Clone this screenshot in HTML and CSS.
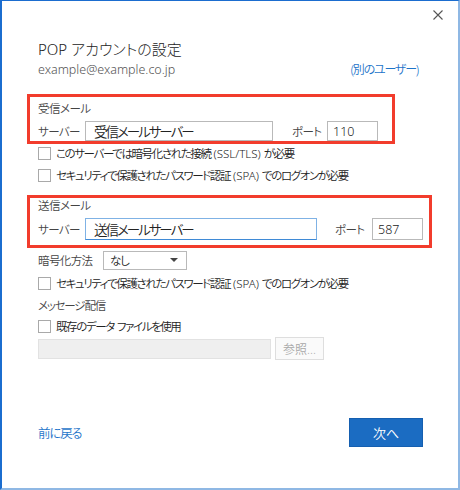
FILE: index.html
```html
<!DOCTYPE html>
<html lang="ja">
<head>
    <meta charset="UTF-8">
    <title>POP アカウントの設定</title>
    <link rel="stylesheet" href="styles.css">
</head>
<body>

<div class="dialog">
    <div class="titlebar">
        <button class="close" type="button" aria-label="閉じる">
            <svg width="10" height="10" viewBox="0 0 10 10">
                <path d="M0.5 0.5 L9.5 9.5 M9.5 0.5 L0.5 9.5" stroke="#555" stroke-width="1.1" fill="none"/>
            </svg>
        </button>
    </div>

    <div class="content">
        <h1 class="title">POP アカウントの設定</h1>
        <div class="account">
            <span class="email">example@example.co.jp</span>
            <a class="link other" href="#">(別のユーザー)</a>
        </div>

        <div class="group group-in">
            <div class="group-label">受信メール</div>
            <div class="server-row">
                <span class="label">サーバー</span>
                <input class="text server" type="text" value="受信メールサーバー">
                <span class="label port-label">ポート</span>
                <input class="text port" type="text" value="110">
            </div>
        </div>

        <label class="check check-ssl"><span class="box"></span>このサーバーでは暗号化された接続<span class="latin"> (SSL/TLS) </span>が必要</label>
        <label class="check check-spa1"><span class="box"></span>セキュリティで保護されたパスワード認証<span class="latin"> (SPA) </span>でのログオンが必要</label>

        <div class="group group-out">
            <div class="group-label">送信メール</div>
            <div class="server-row">
                <span class="label">サーバー</span>
                <input class="text server focused" type="text" value="送信メールサーバー">
                <span class="label port-label">ポート</span>
                <input class="text port" type="text" value="587">
            </div>
        </div>

        <div class="enc-row">
            <span class="label">暗号化方法</span>
            <div class="select">なし<span class="arrow"></span></div>
        </div>
        <label class="check check-spa2"><span class="box"></span>セキュリティで保護されたパスワード認証<span class="latin"> (SPA) </span>でのログオンが必要</label>

        <div class="section-label">メッセージ配信</div>
        <label class="check check-file"><span class="box"></span>既存のデータ<span class="latin"> </span>ファイルを使用</label>
        <div class="file-row">
            <div class="file-path"></div>
            <button class="browse" type="button" disabled>参照...</button>
        </div>

        <div class="footer">
            <a class="link back" href="#">前に戻る</a>
            <button class="next" type="button">次へ</button>
        </div>
    </div>
</div>

</body>
</html>
```

FILE: styles.css
```css
body {
    margin: 0;
    padding: 0;
    background-color: #fff;
    font-family: "Noto Sans", "Noto Sans CJK JP", sans-serif;
    font-size: 11.5px;
    font-weight: 350;
    font-feature-settings: "palt";
    letter-spacing: -1.2px;
    color: #222;
}
.dialog {
    height: 490px;
    box-sizing: border-box;
    border-top: 1px solid #1b6dcf;
    border-left: 2px solid #1b6dcf;
    border-right: 2px solid #8fb8e4;
    border-bottom: 2px solid #8fb8e4;
}
.titlebar {
    height: 38px;
    display: flex;
    justify-content: flex-end;
    padding-right: 15px;
}
.close {
    border: none;
    background: none;
    padding: 0;
    margin-top: 9px;
    width: 10px;
    height: 10px;
    display: flex;
}
.content {
    padding: 0 35px 0 36px;
}
.title {
    margin: 0;
    font-size: 15px;
    font-weight: 300;
    line-height: 20px;
    letter-spacing: 0;
    color: #222;
}
.account {
    display: flex;
    justify-content: space-between;
    align-items: center;
    height: 18px;
    margin-top: 1px;
}
.email {
    font-size: 12.5px;
    letter-spacing: 0;
    color: #555;
}
.link {
    color: #1d74c9;
    text-decoration: none;
}
.other {
    font-size: 12px;
    margin-right: 5px;
}
.group {
    border: 3px solid #f23c2c;
    margin-left: -11px;
    padding-left: 8px;
    margin-top: 16px;
}
.group-in {
    width: 354px;
    padding-top: 4px;
    padding-bottom: 0;
}
.group-out {
    width: 391px;
    margin-top: 11px;
    padding-top: 0;
    padding-bottom: 5px;
}
.group-label, .section-label {
    line-height: 16px;
    color: #444;
}
.group-label {
    letter-spacing: -0.5px;
}
.server-row {
    display: flex;
    align-items: center;
    margin-top: 4px;
}
.label {
    color: #444;
    letter-spacing: -0.6px;
}
.server-row .label:first-child {
    width: 47px;
}
.text {
    box-sizing: border-box;
    height: 20px;
    border: 1px solid #b9b9b9;
    padding: 0 8px;
    font-family: inherit;
    font-weight: 350;
    font-feature-settings: "palt";
    color: #222;
    outline: none;
}
.server {
    font-size: 13.5px;
    letter-spacing: -2px;
}
.group-in .server {
    width: 188px;
}
.group-out .server {
    width: 232px;
    height: 22px;
}
.focused {
    border-color: #7fb2e5;
    border-bottom-color: #3f8ad6;
}
.port {
    width: 51px;
    font-size: 12.5px;
    padding: 0 5px;
}
.group-out .port {
    height: 22px;
}
.group-in .port-label {
    margin-left: 19px;
    width: 35px;
}
.group-out .port-label {
    margin-left: 18px;
    width: 37px;
}
.check {
    display: flex;
    align-items: center;
    height: 18px;
    letter-spacing: -1.4px;
    white-space: pre;
    color: #222;
}
.latin {
    letter-spacing: 0;
}
.box {
    width: 11px;
    height: 11px;
    border: 1px solid #a9a9a9;
    margin-right: 5px;
    background: #fff;
    flex-shrink: 0;
}
.check-ssl {
    margin-top: 0;
}
.check-spa1 {
    margin-top: 4px;
}
.enc-row {
    display: flex;
    align-items: center;
    margin-top: 3px;
    height: 18px;
}
.enc-row .label {
    width: 65px;
}
.select {
    box-sizing: border-box;
    width: 84px;
    height: 19px;
    border: 1px solid #b9b9b9;
    padding: 0 6px;
    display: flex;
    align-items: center;
    justify-content: space-between;
    color: #222;
}
.arrow {
    width: 0;
    height: 0;
    border-left: 4px solid transparent;
    border-right: 4px solid transparent;
    border-top: 4px solid #444;
    margin-right: 2px;
}
.check-spa2 {
    margin-top: 5px;
}
.section-label {
    margin-top: 6px;
}
.check-file {
    margin-top: 3px;
}
.file-row {
    display: flex;
    align-items: center;
    margin-top: 2px;
    height: 23px;
}
.file-path {
    width: 233px;
    height: 20px;
    box-sizing: border-box;
    background: #efefef;
    border: 1px solid #e2e2e2;
}
.browse {
    margin-left: 4px;
    width: 49px;
    height: 23px;
    background: #fafafa;
    border: 1px solid #dedede;
    color: #a8a8a8;
    font-family: inherit;
    font-weight: 350;
    font-size: 12px;
    padding: 0;
}
.footer {
    display: flex;
    justify-content: space-between;
    align-items: center;
    margin-top: 58px;
    height: 29px;
}
.back {
    font-size: 12.5px;
}
.next {
    width: 74px;
    height: 29px;
    background: #1b6cc2;
    border: 1px solid #155fb0;
    color: #fff;
    font-family: inherit;
    font-weight: 350;
    font-feature-settings: "palt";
    font-size: 13px;
    padding: 0;
}
```
